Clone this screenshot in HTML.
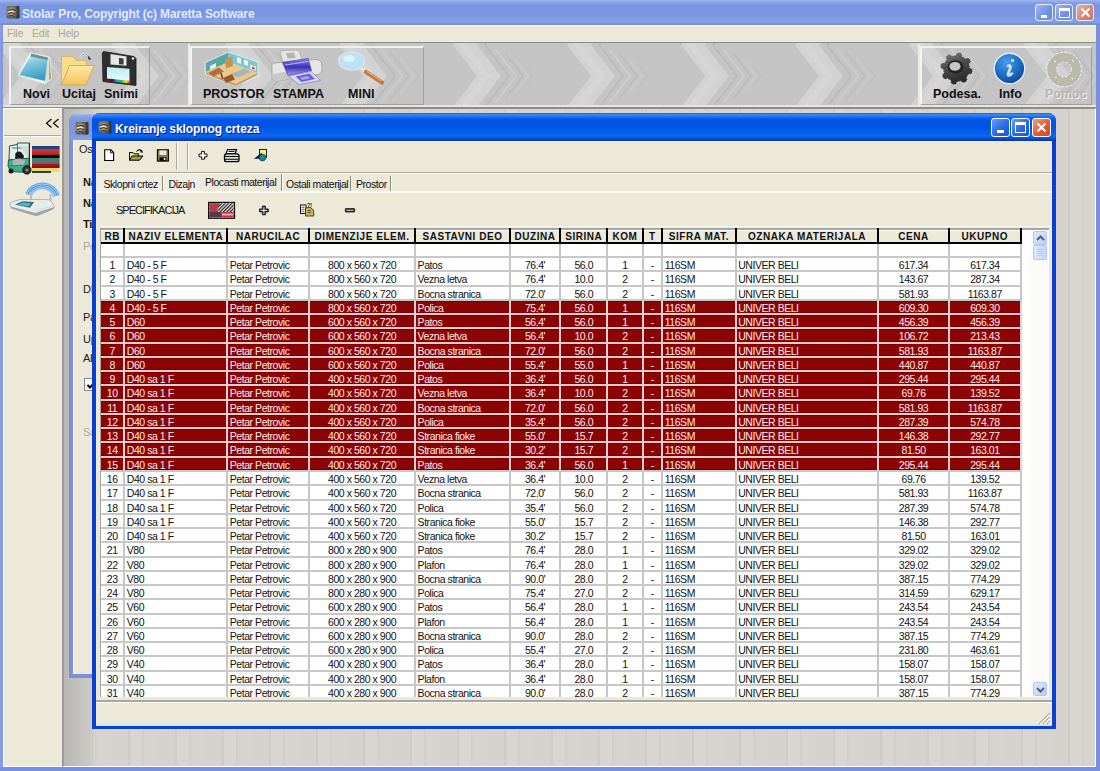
<!DOCTYPE html>
<html><head><meta charset="utf-8">
<style>
*{margin:0;padding:0;box-sizing:border-box}
html,body{width:1100px;height:771px;overflow:hidden;background:#d6d3ce;font-family:"Liberation Sans",sans-serif}
.a{position:absolute}
/* outer frame */
#otitle{left:0;top:0;width:1100px;height:25px;background:linear-gradient(#a0b8ee 0px,#8aa5e8 2px,#7995df 5px,#7a96df 16px,#7fa0e8 19px,#83a0e8 22px,#7a8ac8 24px,#7a8ac8 25px)}
#ottext{left:22px;top:7px;font-weight:bold;font-size:12px;color:#e2eafb;letter-spacing:-0.15px;white-space:nowrap}
#oleft{left:0;top:25px;width:4px;height:746px;background:linear-gradient(90deg,#8a9ee6,#7b8fe0)}
#oright{left:1096px;top:25px;width:4px;height:746px;background:#7b8fe0}
#obottom{left:0;top:767px;width:1100px;height:4px;background:#7b8fe0}
#menu{left:3px;top:25px;width:1093px;height:17px;background:#ece9d8;border-top:1px solid #fbfaf4}
#menu span{position:absolute;top:1px;font-size:10.5px;color:#aca899;letter-spacing:-0.2px}
#tb{left:3px;top:42px;width:1093px;height:66px;background:#c9c9c9;border-top:1px solid #908d82;border-bottom:1px solid #8f8c80;overflow:hidden}
.grp{position:absolute;top:3px;height:59px;border-left:2px solid #f4f4f0;border-top:2px solid #f0f0ec;border-right:1px solid #a09f9a;border-bottom:1px solid #a09f9a}
.lbl{position:absolute;top:44px;font-weight:bold;font-size:12.5px;color:#111;white-space:nowrap}
#lp{left:3px;top:108px;width:60px;height:659px;background:#ece9d8;border-top:1px solid #fff;border-left:1px solid #fff;border-right:1px solid #fbfaf4;border-bottom:1px solid #fff}
#mdi{left:62px;top:108px;width:1034px;height:659px;background:repeating-linear-gradient(90deg,#d6d3ce 0 17px,#cfccc7 17px 19px,#d9d6d1 19px 31px,#d2cfca 31px 33px,#d7d4cf 33px 47px);border-left:2px solid #9c9a94;border-top:1px solid #8d8c88;border-right:1px solid #fff;border-bottom:1px solid #fff}
/* back window */
#bw{left:69px;top:114px;width:40px;height:564px;background:#7b8fe0;border-radius:7px 0 0 0}
#bwt{left:69px;top:114px;width:40px;height:26px;border-radius:7px 0 0 0;background:linear-gradient(#a9bff0 0px,#8aa5e8 2px,#7b97e0 6px,#7a96df 18px,#84a1e7 26px)}
#bwin{left:73px;top:140px;width:30px;height:534px;background:#ece9d8;border-left:1px solid #fff}
.bt{position:absolute;font-size:11px;color:#1a1a1a;white-space:nowrap;letter-spacing:-0.3px}
/* front window */
#fw{left:92px;top:112.5px;width:964px;height:616px;background:#0b3fd3;border-radius:8px 8px 0 0;overflow:hidden}
#fwtitle{left:0;top:0;width:964px;height:28px;background:linear-gradient(#1848a8 0px,#3a8cf6 1px,#2a7af4 3px,#0058e6 6px,#0052e2 14px,#0160f4 20px,#0a66f8 23px,#0a55d8 25px,#0c3c9c 27px)}
#fwbody{left:4px;top:28px;width:956px;height:585px;background:#ece9d8}
#fwttext{left:23px;top:7px;font-weight:bold;font-size:12px;color:#fff;white-space:nowrap;letter-spacing:-0.1px;text-shadow:1px 1px 0 #0a1e8c}
.xb{position:absolute;width:19px;height:19px;border:1px solid #fff;border-radius:3px;background:linear-gradient(135deg,#6c9cf8 0%,#2a68e6 55%,#1c57d8 100%)}
.xbo{position:absolute;width:18px;height:17px;border:1px solid #e8eefc;border-radius:3px;background:linear-gradient(135deg,#9fb8f4 0%,#6f90e4 60%,#6a8be0 100%)}
/* table */
#tbl{left:100px;top:228px;width:949px;height:469px;background:#fff;overflow:hidden;border-left:1px solid #a7a6a0}
#hdr{left:0;top:0;width:921px;height:16px;background:#ece9d8;border-bottom:2px solid #000}
.h{position:absolute;top:1.5px;height:12.5px;font-weight:bold;font-size:10px;text-align:center;line-height:12px;color:#111;letter-spacing:0.55px;white-space:nowrap;overflow:hidden;border-top:1px solid #fff}
.hv{position:absolute;top:0;width:2px;height:16px;background:#000}
.vl{position:absolute;top:16px;width:2px;height:460px;background:#c6c6c6}
.hl{position:absolute;left:0;width:921px;height:2px;background:#c8c8c8}
.hl.sl{background:#eccccc}
.vls{position:absolute;width:2px;background:#e9cfcf}
.td{position:absolute;height:14px;font-size:10.5px;color:#111;line-height:14px;white-space:nowrap;overflow:hidden;padding:0 1.5px;letter-spacing:-0.45px}
.td.l{text-align:left}.td.r{text-align:right;padding-right:5px}.td.c{text-align:center}
.rs{position:absolute;left:0;width:921px;background:#8b0303}
.dt{position:absolute;left:0;width:919px;height:1px;background:repeating-linear-gradient(90deg,#2a0000 0 1px,transparent 1px 2px);opacity:.7}
.td.s{color:#fbe9e9}

.tabt{font-size:10.5px;letter-spacing:-0.45px;color:#111;white-space:nowrap}
#sb{left:1029px;top:229.5px;width:20px;height:467.5px;background:#fbfbf9}
</style></head><body>
<!-- OUTER FRAME -->
<div class="a" id="otitle"></div>
<svg class="a" style="left:5px;top:4px" width="16" height="16" viewBox="0 0 16 16"><defs><radialGradient id="gico" cx="0.35" cy="0.45" r="0.7"><stop offset="0" stop-color="#cfc6ac"/><stop offset="0.5" stop-color="#857c68"/><stop offset="1" stop-color="#3e3a34"/></radialGradient></defs><path d="M1.5 4 Q1.5 2 3.5 2 L14 2 L14.5 13 Q14.5 14.5 13 14.5 L3.5 14.5 Q1.5 14.5 1.5 12.5 Z" fill="url(#gico)"/><path d="M11.5 2.5 L14.5 2.5 L14.5 14 L11.5 14.5 Z" fill="#3a352f" opacity="0.8"/><path d="M2.5 6.5 Q7 4.5 11 6.5 M3 9.5 Q7 7.5 10.5 10 M4 12 Q7 11 9.5 12.5" stroke="#2e2a24" stroke-width="1" fill="none"/><path d="M3 8 Q6 6.5 9 8" stroke="#eee6cc" stroke-width="1.1" fill="none"/></svg>
<div class="a" id="ottext">Stolar Pro, Copyright (c) Maretta Software</div>
<div class="xbo" style="left:1035px;top:4px"><div class="a" style="left:5px;top:10px;width:6px;height:3px;background:#fff"></div></div>
<div class="xbo" style="left:1055px;top:4px"><div class="a" style="left:3px;top:3px;width:11px;height:10px;border:1px solid #fff;border-top-width:3px"></div></div>
<div class="xbo" style="left:1076px;top:4px;background:linear-gradient(135deg,#eab0a0 0%,#d9826b 60%,#cf7660 100%)"><svg class="a" style="left:3px;top:2px" width="11" height="11"><path d="M1.5 1.5L9.5 9.5M9.5 1.5L1.5 9.5" stroke="#fff" stroke-width="2.2"/></svg></div>
<div class="a" id="oleft"></div><div class="a" id="oright"></div><div class="a" id="obottom"></div>
<div class="a" id="menu"><span style="left:4px">File</span><span style="left:29px">Edit</span><span style="left:55px">Help</span></div>
<!-- TOOLBAR -->
<div class="a" id="tb">
<svg class="a" style="left:0;top:0" width="1093" height="63">
 <defs>
  <pattern id="chev" x="-8" y="2" width="114" height="62" patternUnits="userSpaceOnUse">
   <rect width="114" height="62" fill="#c4c4c4"/>
   <path d="M2 0 L26 0 L50 31 L26 62 L2 62 L26 31 Z" fill="#d2d2d2"/>
   <path d="M8 0 L16 0 L40 31 L16 62 L8 62 L32 31 Z" fill="#d8d8d8" opacity="0.7"/>
   <path d="M34 0 L58 31 L34 62" fill="none" stroke="#bababa" stroke-width="1.6"/>
   <path d="M44 4 L65 31 L44 58" fill="none" stroke="#cdcdcd" stroke-width="2"/>
   <path d="M54 8 L72 31 L54 54" fill="none" stroke="#bcbcbc" stroke-width="1.4"/>
   <path d="M64 14 L77 31 L64 48" fill="none" stroke="#cbcbcb" stroke-width="1.6"/>
   <path d="M74 20 L82 31 L74 42" fill="none" stroke="#bfbfbf" stroke-width="1.2"/>
  </pattern>
 </defs>
 <rect width="1093" height="63" fill="url(#chev)"/>
</svg>

  <div class="a" style="left:0;top:62px;width:1093px;height:2px;background:#e6e5df"></div>
  <div class="grp" style="left:6px;width:141px"></div>
  <div class="grp" style="left:187px;width:234px"></div>
  <div class="grp" style="left:917px;width:172px"></div>
  <div class="a" style="left:185px;top:1px;width:2px;height:63px;background:#ecebe6"></div>
  <div class="a" style="left:915px;top:1px;width:2px;height:63px;background:#ecebe6"></div>
  <div class="lbl" style="left:20px">Novi</div>
  <div class="lbl" style="left:59px">Ucitaj</div>
  <div class="lbl" style="left:101px">Snimi</div>
  <div class="lbl" style="left:200px">PROSTOR</div>
  <div class="lbl" style="left:270px">STAMPA</div>
  <div class="lbl" style="left:345px">MINI</div>
  <div class="lbl" style="left:930px">Podesa.</div>
  <div class="lbl" style="left:996px">Info</div>
  <div class="lbl" style="left:1042px;color:#b8b6ab;text-shadow:1px 1px 0 #eee">Pomoc</div>
</div>
<svg class="a" style="left:0;top:44px" width="1100" height="62" viewBox="0 44 1100 62">
 <defs>
  <linearGradient id="gnote" x1="0" y1="0" x2="0.3" y2="1"><stop offset="0" stop-color="#cdeef5"/><stop offset="0.45" stop-color="#7cc5dc"/><stop offset="1" stop-color="#3a9fc4"/></linearGradient>
  <linearGradient id="gfold" x1="0" y1="0" x2="0" y2="1"><stop offset="0" stop-color="#fde9a6"/><stop offset="1" stop-color="#f3c25a"/></linearGradient>
  <linearGradient id="glab" x1="0" y1="0" x2="0" y2="1"><stop offset="0" stop-color="#b6eef4"/><stop offset="1" stop-color="#f2fbfd"/></linearGradient>
  <linearGradient id="grain" x1="0" y1="0" x2="1" y2="0"><stop offset="0" stop-color="#a01010"/><stop offset="0.25" stop-color="#301060"/><stop offset="0.45" stop-color="#30a0e0"/><stop offset="0.65" stop-color="#30c040"/><stop offset="0.85" stop-color="#f0e030"/><stop offset="1" stop-color="#e03020"/></linearGradient>
  <radialGradient id="ginfo" cx="0.4" cy="0.35" r="0.7"><stop offset="0" stop-color="#6fb7ee"/><stop offset="0.6" stop-color="#2a78cc"/><stop offset="1" stop-color="#1a4f9a"/></radialGradient>
  <linearGradient id="gbed" x1="0" y1="0" x2="0" y2="1"><stop offset="0" stop-color="#8d86e8"/><stop offset="0.5" stop-color="#3b2fb8"/><stop offset="1" stop-color="#a7a2f0"/></linearGradient>
 </defs>
 <!-- Novi notepad -->
 <path d="M30 52.5 L50 57 L51.5 79 L45 84 L18 75.5 Z" fill="#f4f6f4" stroke="#dfe3df" stroke-width="1"/>
 <path d="M44.5 59 L50 57.5 L51 78.5 L45.5 83 Z" fill="#d9dcd2"/>
 <path d="M49.5 58 L51 78.5 L49 80 Z" fill="#b8a060"/>
 <path d="M31 55 L47.5 58.5 L45 81 L19.5 75 Z" fill="url(#gnote)"/>
 <path d="M31 53.5 L48 57.5 L47.5 60 L30.5 56.5 Z" fill="#6f8e90"/>
 <!-- Ucitaj folder -->
 <path d="M61.5 57.5 Q61.5 56.5 63 56.5 L73 56.5 L76 60.5 L86 60.5 L86.5 65 L62 85 L61.5 84 Z" fill="#f7dc8c" stroke="#d8b468" stroke-width="0.9"/>
 <path d="M69.5 65.5 L94 65.5 L86 85 L61.5 85 Z" fill="url(#gfold)" stroke="#d4a84e" stroke-width="0.9"/>
 <path d="M80 57.5 Q84 51 89.5 56.5" fill="none" stroke="#e8eef8" stroke-width="2.2"/>
 <path d="M80 57.5 Q84 51 89.5 56.5" fill="none" stroke="#8090b0" stroke-width="0.8"/>
 <path d="M87.5 55 L91.5 59.5 L88.5 59.5 Z" fill="#2a3150"/>
 <!-- Snimi floppy -->
 <path d="M103.5 51.5 L134 56.5 L136 58.5 L136 85.5 L103 81.5 L102.3 53 Z" fill="#2f2f31" stroke="#1a1a1a" stroke-width="0.8"/>
 <path d="M110.5 54 L126.5 56.5 L126.5 65.8 L110.5 64.5 Z" fill="#e6e6e4"/>
 <path d="M119 58 L123.5 58.6 L123.5 64.5 L119 64.2 Z" fill="#3b3b3b"/>
 <path d="M107 67 L129.5 68.8 L129.5 83 L107 80.5 Z" fill="url(#glab)"/>
 <path d="M107 78.5 L129.5 80.8 L129.5 83.5 L107 81 Z" fill="url(#grain)"/>
 <circle cx="133" cy="58.5" r="1.2" fill="#eee"/>
 <!-- PROSTOR room -->
 <path d="M204.5 62.5 L228.5 51.5 L258.5 62 L258.5 76 L235.5 86.5 L205 74.5 Z" fill="#eef2f4" opacity="0.75"/>
 <path d="M205.5 63 L228.5 52.5 L228.5 62 L206 72 Z" fill="#58a6ae"/>
 <path d="M228.5 52.5 L257.5 62.5 L257.5 73 L228.5 62 Z" fill="#7fc6ce"/>
 <path d="M206 72 L228.5 62 L257.5 73 L235.5 84 Z" fill="#e9c98e"/>
 <path d="M206 72 L235.5 84 L235.5 86 L206 74 Z" fill="#c49a5e"/>
 <path d="M235.5 84 L257.5 73 L257.5 75 L235.5 86 Z" fill="#b89868"/>
 <path d="M237 57 L241 58.4 L241 64 L237 62.6 Z M244 59.5 L248 61 L248 66 L244 64.6 Z" fill="#e8f4f6"/>
 <path d="M208.5 72.5 L219 67.5 L224 71.5 L213.5 76.5 Z" fill="#b0703e"/>
 <path d="M210 66 L216 63 L216 67 L210 70 Z" fill="#f0f0f0"/>
 <path d="M225 59 L232 56.5 L233 66 L226 68.5 Z" fill="#c88e54"/>
 <path d="M217.5 60.5 L224 57.5 L224 63.5 L217.5 66.5 Z" fill="#4fae8a"/>
 <path d="M231 74 L244.5 68.5 L251 72 L237.5 77.5 Z" fill="#a9b3b8"/>
 <path d="M223 78 L232 74 L235 79.5 L226 83 Z" fill="#98582f"/>
 <path d="M220 73 L222 79 L223.5 78.5 L221.5 72.5 Z" fill="#7a4626"/>
 <path d="M250 64.5 L256 66.8 L256 71 L250 68.8 Z" fill="#f2dbe4"/>
 <path d="M252 67 L254.5 68 L254.5 69.5 L252 68.5 Z" fill="#8a2850"/>
 <!-- STAMPA printer -->
 <path d="M280 53 Q281 50.5 284 50.5 L296 50 Q299 50 300 53 L302 60 L283 62 Z" fill="#e4e4e2" stroke="#a8a8a4" stroke-width="0.8"/>
 <path d="M286 53 L294 52.6 L295.5 58 L287.5 58.5 Z" fill="#b4b4b0"/>
 <path d="M272 67 Q271 63.5 275 63 L285 62 Q289 62 290 66 L292 74 Q292.5 78 289 79 L278 81 Q273 81.5 272 77 Z" fill="#e6e6e4" stroke="#9c9c98" stroke-width="0.8"/>
 <path d="M273 74 L291 71 L292 75 Q292 78 289 79 L278 81 Q273 81.5 272.5 77 Z" fill="#c8c8c6"/>
 <path d="M304 60.5 L316 59.5 Q320.5 59.5 321.5 63 L322 70 Q322 74 318 74.5 L309 75.5 Z" fill="#e6e6e4" stroke="#9c9c98" stroke-width="0.8"/>
 <path d="M282.5 62.5 L308 58.5 L311.5 70.5 L288 75.5 Z" fill="url(#gbed)" stroke="#4a40a8" stroke-width="0.7"/>
 <path d="M285 65 L308.5 61.5" stroke="#b8b4f4" stroke-width="1.2"/>
 <path d="M288.5 76 L311 71.5 L320.5 80.5 L299 84.5 Z" fill="#dcdcec" stroke="#8886bc" stroke-width="0.8"/>
 <path d="M295.5 76.5 L309.5 73.5 L315 79 L301.5 82 Z" fill="#6a62d6"/>
 <path d="M300 77.5 L308 76 L310 78.5 L302 80 Z" fill="#a6a2ee"/>
 <!-- MINI magnifier -->
 <ellipse cx="351.5" cy="61" rx="13" ry="9.2" fill="#bde0f4" stroke="#d8e4ee" stroke-width="1.3"/>
 <ellipse cx="349" cy="58.5" rx="6" ry="3.5" fill="#dff2fb"/>
 <path d="M361 68 L365 71" stroke="#e6e6e6" stroke-width="3"/>
 <path d="M366 72 L382 82.5" stroke="#c6763e" stroke-width="4.2" stroke-linecap="round"/>
 <path d="M367 71.5 L381 80.5" stroke="#e8a878" stroke-width="1.2" stroke-linecap="round"/>
 <!-- Podesa gear -->
 <defs><linearGradient id="ggear" x1="0" y1="0" x2="0.6" y2="1"><stop offset="0" stop-color="#8a8a8a"/><stop offset="0.45" stop-color="#4e4e4e"/><stop offset="1" stop-color="#262626"/></linearGradient>
 <radialGradient id="ginfo2" cx="0.4" cy="0.3" r="0.75"><stop offset="0" stop-color="#4aa0e8"/><stop offset="0.55" stop-color="#1f6fc6"/><stop offset="1" stop-color="#0e4590"/></radialGradient></defs>
 <g transform="translate(956.5 68.5) rotate(11)">
  <path d="M16.50 0.00 L16.47 0.52 L16.38 1.03 L16.22 1.53 L15.98 2.02 L15.66 2.48 L15.21 2.90 L14.37 3.21 L13.08 3.36 L12.96 3.77 L12.84 4.17 L12.70 4.57 L12.55 4.97 L12.39 5.36 L12.22 5.75 L12.03 6.13 L11.83 6.50 L11.62 6.87 L12.43 7.89 L12.80 8.70 L12.83 9.32 L12.73 9.87 L12.55 10.38 L12.31 10.85 L12.01 11.28 L11.67 11.67 L11.28 12.01 L10.85 12.31 L10.38 12.55 L9.87 12.73 L9.32 12.83 L8.70 12.80 L7.89 12.43 L6.87 11.62 L6.50 11.83 L6.13 12.03 L5.75 12.22 L5.36 12.39 L4.97 12.55 L4.57 12.70 L4.17 12.84 L3.77 12.96 L3.36 13.08 L3.21 14.37 L2.90 15.21 L2.48 15.66 L2.02 15.98 L1.53 16.22 L1.03 16.38 L0.52 16.47 L0.00 16.50 L-0.52 16.47 L-1.03 16.38 L-1.53 16.22 L-2.02 15.98 L-2.48 15.66 L-2.90 15.21 L-3.21 14.37 L-3.36 13.08 L-3.77 12.96 L-4.17 12.84 L-4.57 12.70 L-4.97 12.55 L-5.36 12.39 L-5.75 12.22 L-6.13 12.03 L-6.50 11.83 L-6.87 11.62 L-7.89 12.43 L-8.70 12.80 L-9.32 12.83 L-9.87 12.73 L-10.38 12.55 L-10.85 12.31 L-11.28 12.01 L-11.67 11.67 L-12.01 11.28 L-12.31 10.85 L-12.55 10.38 L-12.73 9.87 L-12.83 9.32 L-12.80 8.70 L-12.43 7.89 L-11.62 6.87 L-11.83 6.50 L-12.03 6.13 L-12.22 5.75 L-12.39 5.36 L-12.55 4.97 L-12.70 4.57 L-12.84 4.17 L-12.96 3.77 L-13.08 3.36 L-14.37 3.21 L-15.21 2.90 L-15.66 2.48 L-15.98 2.02 L-16.22 1.53 L-16.38 1.03 L-16.47 0.52 L-16.50 0.00 L-16.47 -0.52 L-16.38 -1.03 L-16.22 -1.53 L-15.98 -2.02 L-15.66 -2.48 L-15.21 -2.90 L-14.37 -3.21 L-13.08 -3.36 L-12.96 -3.77 L-12.84 -4.17 L-12.70 -4.57 L-12.55 -4.97 L-12.39 -5.36 L-12.22 -5.75 L-12.03 -6.13 L-11.83 -6.50 L-11.62 -6.87 L-12.43 -7.89 L-12.80 -8.70 L-12.83 -9.32 L-12.73 -9.87 L-12.55 -10.38 L-12.31 -10.85 L-12.01 -11.28 L-11.67 -11.67 L-11.28 -12.01 L-10.85 -12.31 L-10.38 -12.55 L-9.87 -12.73 L-9.32 -12.83 L-8.70 -12.80 L-7.89 -12.43 L-6.87 -11.62 L-6.50 -11.83 L-6.13 -12.03 L-5.75 -12.22 L-5.36 -12.39 L-4.97 -12.55 L-4.57 -12.70 L-4.17 -12.84 L-3.77 -12.96 L-3.36 -13.08 L-3.21 -14.37 L-2.90 -15.21 L-2.48 -15.66 L-2.02 -15.98 L-1.53 -16.22 L-1.03 -16.38 L-0.52 -16.47 L-0.00 -16.50 L0.52 -16.47 L1.03 -16.38 L1.53 -16.22 L2.02 -15.98 L2.48 -15.66 L2.90 -15.21 L3.21 -14.37 L3.36 -13.08 L3.77 -12.96 L4.17 -12.84 L4.57 -12.70 L4.97 -12.55 L5.36 -12.39 L5.75 -12.22 L6.13 -12.03 L6.50 -11.83 L6.87 -11.62 L7.89 -12.43 L8.70 -12.80 L9.32 -12.83 L9.87 -12.73 L10.38 -12.55 L10.85 -12.31 L11.28 -12.01 L11.67 -11.67 L12.01 -11.28 L12.31 -10.85 L12.55 -10.38 L12.73 -9.87 L12.83 -9.32 L12.80 -8.70 L12.43 -7.89 L11.62 -6.87 L11.83 -6.50 L12.03 -6.13 L12.22 -5.75 L12.39 -5.36 L12.55 -4.97 L12.70 -4.57 L12.84 -4.17 L12.96 -3.77 L13.08 -3.36 L14.37 -3.21 L15.21 -2.90 L15.66 -2.48 L15.98 -2.02 L16.22 -1.53 L16.38 -1.03 L16.47 -0.52 Z" fill="url(#ggear)" stroke="#eeeeee" stroke-width="0.9" stroke-dasharray="1.2 0.8"/>
 </g>
 <ellipse cx="955.5" cy="66.8" rx="8" ry="6.6" fill="#222"/>
 <ellipse cx="955" cy="66.3" rx="5.6" ry="4.4" fill="#c6c6c6"/>
 <!-- Info -->
 <circle cx="1009.5" cy="68.5" r="15.3" fill="url(#ginfo2)" stroke="#e2ebf7" stroke-width="1.4"/>
 <path d="M1012.5 60.5 m-1.6 0 a1.6 1.6 0 1 0 3.2 0 a1.6 1.6 0 1 0 -3.2 0" fill="#cfe4f8"/>
 <path d="M1008 66 Q1011 64.5 1010.5 67.5 L1008 74 Q1007.5 76 1010 75 L1012 73.5" fill="none" stroke="#cfe4f8" stroke-width="2.6" stroke-linecap="round"/>
 <!-- Pomoc lifebuoy (disabled) -->
 <circle cx="1064" cy="69.5" r="12.3" fill="none" stroke="#bbb8ac" stroke-width="9.6"/>
 <circle cx="1064" cy="69.5" r="17.3" fill="none" stroke="#f2f2ee" stroke-width="1" stroke-dasharray="3 1.5"/>
 <circle cx="1064" cy="69.5" r="7.4" fill="none" stroke="#eeeeea" stroke-width="1" stroke-dasharray="2.5 1.5"/>
 <path d="M1054 61 l2 1 M1072 60 l1.5 1.5 M1055 78 l1.5 -1 M1073 79 l-1.5 -1" stroke="#eeeeea" stroke-width="1.2"/>
</svg>

<!-- LEFT PANEL -->
<div class="a" id="lp"></div>
<div class="a" style="left:4px;top:135px;width:57px;height:2px;border-top:1px solid #aca899;border-bottom:1px solid #fff"></div>
<svg class="a" style="left:45px;top:118px" width="15" height="11"><path d="M6.5 1L1.5 5.3L6.5 9.6M13.5 1L8.5 5.3L13.5 9.6" fill="none" stroke="#111" stroke-width="1.3"/></svg>
<svg class="a" style="left:4px;top:138px" width="58" height="82" viewBox="4 138 58 82">
 <defs>
  <linearGradient id="gstr" x1="0" y1="0" x2="0" y2="1">
   <stop offset="0" stop-color="#1f3a78"/><stop offset="0.13" stop-color="#2a4a88"/>
   <stop offset="0.14" stop-color="#d83a3a"/><stop offset="0.33" stop-color="#b82222"/>
   <stop offset="0.35" stop-color="#100808"/><stop offset="0.45" stop-color="#100808"/>
   <stop offset="0.47" stop-color="#2f8a74"/><stop offset="0.58" stop-color="#3a8070"/>
   <stop offset="0.60" stop-color="#8a6070"/><stop offset="0.70" stop-color="#8a5060"/>
   <stop offset="0.72" stop-color="#a01818"/><stop offset="0.85" stop-color="#8a1010"/>
   <stop offset="0.87" stop-color="#f2dc78"/><stop offset="1" stop-color="#e8d060"/>
  </linearGradient>
  <linearGradient id="gwifi" x1="0" y1="0" x2="0" y2="1"><stop offset="0" stop-color="#3f86dc"/><stop offset="1" stop-color="#8fc4f0"/></linearGradient>
 </defs>
 <!-- forklift -->
 <rect x="32" y="146" width="27.6" height="25.6" fill="url(#gstr)"/>
 <path d="M32 172 L51 172" stroke="#111" stroke-width="1.6"/>
 <path d="M9.5 146 L17 144.5 L17.5 143 L29.5 143 L29.5 160 L9 160 Z" fill="#e4eeea" stroke="#1f5a48" stroke-width="1"/>
 <path d="M17.5 143.5 L17.5 156 M12 148 L24 148" stroke="#2f8a6c" stroke-width="1"/>
 <path d="M20 146 L28.5 146 L28.5 158 L24 152 Z" fill="#d0dcd8"/>
 <path d="M15.5 153 Q18 150.5 21 152 L24 156 L23 160 L15 160 Z" fill="#151c1a"/>
 <path d="M8.5 160 L29.5 158 L29.5 172 L27 172.5 L10.5 171.5 L8 166 Z" fill="#3fb08e" stroke="#1c4a3c" stroke-width="0.9"/>
 <path d="M12.5 160 Q19 157 25 160 L24 166 L13.5 166 Z" fill="#aeb6b2"/>
 <path d="M9 166 L29 165" stroke="#2a8068" stroke-width="1"/>
 <path d="M28.8 143 L30 143 L30 172.5 L28.8 172.5 Z" fill="#17302a"/>
 <circle cx="26.9" cy="170" r="4.2" fill="#2a2e2c" stroke="#111" stroke-width="0.8"/>
 <circle cx="26.9" cy="170" r="1.6" fill="#8a908c"/>
 <circle cx="11" cy="171" r="2.5" fill="#1c1c1c"/>
 <!-- router -->
 <path d="M28.67 194.79 A 14.50 13.77 0 0 1 56.31 195.93" fill="none" stroke="#d8e8f6" stroke-width="8"/><path d="M31.21 195.67 A 11.80 11.21 0 0 1 53.70 196.60" fill="none" stroke="#7fb6ec" stroke-width="1.3"/><path d="M29.52 195.08 A 13.60 12.92 0 0 1 55.44 196.16" fill="none" stroke="#5b9ee6" stroke-width="1.3"/><path d="M27.83 194.50 A 15.40 14.63 0 0 1 57.18 195.71" fill="none" stroke="#4a90e0" stroke-width="1.3"/><path d="M26.14 193.91 A 17.20 16.34 0 0 1 58.91 195.27" fill="none" stroke="#6aaae8" stroke-width="1.3"/>
 <path d="M31 192 L31 204 M50.5 194 L50.5 205" stroke="#b8bcc0" stroke-width="2"/>
 <path d="M10 205 Q9.5 203 12 202 L20 199.5 L47 199.5 Q50 199.5 51.5 201.5 L54 206 Q55 208 52 209.5 L38.5 215 Q36.5 216 34 215.2 L12 208.5 Q10 207.5 10 205 Z" fill="#e8eaec" stroke="#a4a8ac" stroke-width="0.8"/>
 <path d="M10.5 206.5 L35.5 213 L54.2 207 Q54.8 208.5 52 209.8 L38.5 215.2 Q36.5 216 34 215.3 L12 208.6 Q10.4 207.8 10.5 206.5 Z" fill="#9ea3a8"/>
 <path d="M15 204.5 L22.5 201.2 L34 202 L30 207.8 Z" fill="#3a6c78"/>
 <path d="M17.5 204.6 L23 202.6 L31 203.4 L28.5 206.3 Z" fill="#3cc0cc"/>
 <path d="M36 211 L52 206" stroke="#d0d4d8" stroke-width="0.8"/>
 </svg>

<!-- MDI -->
<div class="a" id="mdi"></div>
<div class="a" style="left:64px;top:109px;width:30px;height:657px;background:linear-gradient(90deg,#b9b7b3,#c6c4c0 60%,#d0cdc9)"></div>
<!-- BACK WINDOW -->
<div class="a" id="bw"></div>
<div class="a" id="bwt"></div>
<svg class="a" style="left:74px;top:120px" width="16" height="16" viewBox="0 0 16 16"><path d="M1.5 4 Q1.5 2 3.5 2 L14 2 L14.5 13 Q14.5 14.5 13 14.5 L3.5 14.5 Q1.5 14.5 1.5 12.5 Z" fill="url(#gico)"/><path d="M11.5 2.5 L14.5 2.5 L14.5 14 L11.5 14.5 Z" fill="#3a352f" opacity="0.8"/><path d="M2.5 6.5 Q7 4.5 11 6.5 M3 9.5 Q7 7.5 10.5 10 M4 12 Q7 11 9.5 12.5" stroke="#2e2a24" stroke-width="1" fill="none"/><path d="M3 8 Q6 6.5 9 8" stroke="#eee6cc" stroke-width="1.1" fill="none"/></svg>
<div class="a" id="bwin"></div>
<div class="bt" style="left:79px;top:143px">Os</div>
<div class="bt" style="left:83px;top:176px;font-weight:bold">Na</div>
<div class="bt" style="left:83px;top:197px;font-weight:bold">Na</div>
<div class="bt" style="left:83px;top:218px;font-weight:bold">Tip</div>
<div class="bt" style="left:83px;top:240px;color:#aca899">Po</div>
<div class="bt" style="left:83px;top:283px">DI</div>
<div class="bt" style="left:83px;top:311px">Pa</div>
<div class="bt" style="left:83px;top:333px">Up</div>
<div class="bt" style="left:83px;top:352px">AB</div>
<div class="a" style="left:84px;top:378px;width:13px;height:13px;border:1px solid #8a8a8a;background:#fff"><svg class="a" style="left:1px;top:1px" width="10" height="10"><path d="M1.5 5L4 7.5L9 2" stroke="#000" stroke-width="2" fill="none"/></svg></div>
<div class="bt" style="left:83px;top:426px;color:#aca899">Sa</div>
<!-- FRONT WINDOW -->
<div class="a" id="fw">
  <div class="a" id="fwtitle"></div>
  <div class="a" id="fwbody"></div>
</div>
<svg class="a" style="left:97px;top:119px" width="16" height="16" viewBox="0 0 16 16"><path d="M1.5 4 Q1.5 2 3.5 2 L14 2 L14.5 13 Q14.5 14.5 13 14.5 L3.5 14.5 Q1.5 14.5 1.5 12.5 Z" fill="url(#gico)"/><path d="M11.5 2.5 L14.5 2.5 L14.5 14 L11.5 14.5 Z" fill="#3a352f" opacity="0.8"/><path d="M2.5 6.5 Q7 4.5 11 6.5 M3 9.5 Q7 7.5 10.5 10 M4 12 Q7 11 9.5 12.5" stroke="#2e2a24" stroke-width="1" fill="none"/><path d="M3 8 Q6 6.5 9 8" stroke="#eee6cc" stroke-width="1.1" fill="none"/></svg>
<div class="a" id="fwttext" style="left:115px;top:122px">Kreiranje sklopnog crteza</div>
<div class="xb" style="left:991px;top:118px"><div class="a" style="left:5px;top:11px;width:7px;height:3px;background:#fff"></div></div>
<div class="xb" style="left:1011px;top:118px"><div class="a" style="left:3px;top:3px;width:11px;height:11px;border:1px solid #fff;border-top-width:3px"></div></div>
<div class="xb" style="left:1032px;top:118px;background:linear-gradient(135deg,#f0a080 0%,#e05c34 55%,#d04a22 100%)"><svg class="a" style="left:3px;top:3px" width="11" height="11"><path d="M1.5 1.5L9.5 9.5M9.5 1.5L1.5 9.5" stroke="#fff" stroke-width="2.2"/></svg></div>
<!-- inner toolbar -->
<div class="a" style="left:96px;top:172px;width:956px;height:2px;border-top:1px solid #aca899;border-bottom:1px solid #fff"></div>
<div class="a" style="left:176px;top:143px;width:2px;height:27px;border-left:1px solid #aca899;border-right:1px solid #fff"></div>
<div class="a" style="left:187px;top:143px;width:2px;height:27px;border-left:1px solid #aca899;border-right:1px solid #fff"></div>
<svg class="a" style="left:96px;top:140px" width="300" height="85" viewBox="96 140 300 85">
 <defs>
  <pattern id="hatch" width="2.4" height="2.4" patternUnits="userSpaceOnUse" patternTransform="rotate(45)"><rect width="2.4" height="2.4" fill="#e8e8e8"/><rect width="1.2" height="2.4" fill="#222"/></pattern>
 </defs>
 <!-- new doc -->
 <path d="M104.7 149.8 L111 149.8 L113.6 152.4 L113.6 160.5 L104.7 160.5 Z" fill="#fff" stroke="#000" stroke-width="1.1"/>
 <path d="M110.6 150 L110.6 152.8 L113.4 152.8" fill="none" stroke="#000" stroke-width="0.9"/>
 <!-- open folder -->
 <path d="M129.5 152.5 L133 152.5 L134 153.8 L138.5 153.8 L138.5 156 L129.5 160 Z" fill="#e8e878" stroke="#000" stroke-width="1"/>
 <path d="M132 156 L143 156 L139.5 160.2 L129.5 160.2 Z" fill="#a8a040" stroke="#000" stroke-width="1"/>
 <path d="M136.5 151.5 Q139 148.5 142 151" fill="none" stroke="#000" stroke-width="1.1"/>
 <path d="M141 149.8 L143.3 152.5 L140.3 152.6 Z" fill="#000"/>
 <!-- save -->
 <rect x="157.4" y="149.8" width="11" height="11.3" fill="#808040" stroke="#000" stroke-width="1.1"/>
 <rect x="159.4" y="150.4" width="7" height="4.6" fill="#e8e8d8"/>
 <rect x="159.5" y="157.4" width="6.8" height="3.4" fill="#000"/>
 <rect x="163.8" y="158" width="1.5" height="2" fill="#fff"/>
 <!-- plus -->
 <path d="M201.6 151.4 L204.4 151.4 L204.4 154 L207 154 L207 156.8 L204.4 156.8 L204.4 159.2 L201.6 159.2 L201.6 156.8 L199 156.8 L199 154 L201.6 154 Z" fill="#fff" stroke="#111" stroke-width="1"/>
 <!-- printer -->
 <path d="M227.5 149.6 L236.5 149.6 L235 153.8 L226 153.8 Z" fill="#fff" stroke="#000" stroke-width="1.2"/>
 <path d="M228.5 151.5 L234.5 151.5" stroke="#000" stroke-width="0.9"/>
 <rect x="224.5" y="153.8" width="14.5" height="7.8" rx="2.2" fill="#e0e0d8" stroke="#000" stroke-width="1.3"/>
 <path d="M225 156.5 L238.5 156.5 M225 159.2 L238.5 159.2" stroke="#000" stroke-width="1.1"/>
 <!-- shapes icon -->
 <rect x="259.5" y="149.5" width="7" height="8" fill="#f0f080" stroke="#111" stroke-width="0.9"/>
 <path d="M253.8 158.8 L261.5 152.8 L262.5 158.8 Z" fill="#101848"/>
 <circle cx="262.5" cy="157.6" r="3.3" fill="#208890" stroke="#0a2a30" stroke-width="0.7"/>
 <!-- spec row -->
 <rect x="208.7" y="202.5" width="25.7" height="15.7" fill="#fff" stroke="#111" stroke-width="1.4"/>
 <rect x="209.5" y="203.3" width="24" height="14" fill="url(#hatch)"/>
 <path d="M209.5 203.3 L220 203.3 L216 212 L233.5 212 L233.5 217.3 L209.5 217.3 Z" fill="#b83a48"/>
 <path d="M209.5 212 L220 212 L222 217.3 L209.5 217.3 Z" fill="#5a3a48"/>
 <path d="M222 213.5 L233 213.5 L233 215.5 L222 215.5 Z" fill="#f0a8b0"/>
 <path d="M262.4 206 L265.4 206 L265.4 208.9 L268.3 208.9 L268.3 211.9 L265.4 211.9 L265.4 214.8 L262.4 214.8 L262.4 211.9 L259.5 211.9 L259.5 208.9 L262.4 208.9 Z" fill="#333" stroke="#111" stroke-width="0.8"/><path d="M263.9 207.2 L263.9 213.6 M260.7 210.4 L267.1 210.4" stroke="#fff" stroke-width="0.9"/>
 <rect x="300.5" y="205" width="5.5" height="8.5" fill="#fff" stroke="#111" stroke-width="1"/>
 <path d="M301.5 207.3 L304.5 207.3 M301.5 209.3 L304.5 209.3 M301.5 211.3 L304.5 211.3" stroke="#111" stroke-width="0.7"/>
 <path d="M305.5 208 L310 207.2 L313.5 210 L313.8 216 L305.5 216 Z" fill="#c8b850" stroke="#222" stroke-width="0.8"/>
 <path d="M307.5 210.5 L311 210.5 M307.5 212.5 L311 212.5" stroke="#333" stroke-width="0.8"/>
 <text x="307" y="206.5" font-family="Liberation Sans" font-weight="bold" font-size="5.5" fill="#111">?!</text>
 <rect x="345.3" y="208.6" width="9.4" height="3.4" rx="0.5" fill="#333" stroke="#111" stroke-width="0.8"/><path d="M346.5 210.3 L353.5 210.3" stroke="#fff" stroke-width="0.8"/>
</svg>

<!-- tabs -->
<div class="a" style="left:98px;top:175px;width:102px;height:18px;background:#f0eee4"></div>
<div class="a" style="left:162px;top:176px;width:2px;height:16px;border-left:1px solid #8d8a7c;border-right:1px solid #fff"></div>
<div class="a tabt" style="left:103.5px;top:178px">Sklopni crtez</div>
<div class="a tabt" style="left:168.5px;top:178px">Dizajn</div>
<div class="a tabt" style="left:205px;top:176px">Plocasti materijal</div>
<div class="a" style="left:281px;top:174px;width:2px;height:18px;border-left:1px solid #8d8a7c;border-right:1px solid #fff"></div>
<div class="a tabt" style="left:286px;top:178px">Ostali materijal</div>
<div class="a" style="left:350px;top:176px;width:2px;height:16px;border-left:1px solid #8d8a7c;border-right:1px solid #fff"></div>
<div class="a tabt" style="left:356px;top:178px">Prostor</div>
<div class="a" style="left:390px;top:176px;width:2px;height:16px;border-left:1px solid #8d8a7c;border-right:1px solid #fff"></div>
<div class="a" style="left:116px;top:204px;font-size:11px;letter-spacing:-1px;color:#111">SPECIFIKACIJA</div>
<div class="a" style="left:96px;top:191px;width:956px;height:2px;background:#fbfaf3"></div>

<!-- table -->
<div class="a" style="left:100px;top:225.5px;width:950px;height:1.5px;background:#f9f8f1"></div>
<div class="a" id="tbl">
  <div class="a" id="hdr"></div>
  <div class="a" style="left:0;top:0;width:949px;height:1.5px;background:#a9a79e"></div>
<div class="h" style="left:0.00px;width:22.30px">RB</div>
<div class="h" style="left:24.30px;width:101.00px">NAZIV ELEMENTA</div>
<div class="h" style="left:127.30px;width:79.70px">NARUCILAC</div>
<div class="h" style="left:209.00px;width:104.10px">DIMENZIJE ELEM.</div>
<div class="h" style="left:315.10px;width:92.90px">SASTAVNI DEO</div>
<div class="h" style="left:410.00px;width:48.20px">DUZINA</div>
<div class="h" style="left:460.20px;width:45.20px">SIRINA</div>
<div class="h" style="left:507.40px;width:33.20px">KOM</div>
<div class="h" style="left:542.60px;width:17.60px">T</div>
<div class="h" style="left:562.20px;width:71.50px">SIFRA MAT.</div>
<div class="h" style="left:635.70px;width:140.70px">OZNAKA MATERIJALA</div>
<div class="h" style="left:778.40px;width:68.30px">CENA</div>
<div class="h" style="left:848.70px;width:70.30px">UKUPNO</div>
<div class="hv" style="left:22.30px"></div>
<div class="hv" style="left:125.30px"></div>
<div class="hv" style="left:207.00px"></div>
<div class="hv" style="left:313.10px"></div>
<div class="hv" style="left:408.00px"></div>
<div class="hv" style="left:458.20px"></div>
<div class="hv" style="left:505.40px"></div>
<div class="hv" style="left:540.60px"></div>
<div class="hv" style="left:560.20px"></div>
<div class="hv" style="left:633.70px"></div>
<div class="hv" style="left:776.40px"></div>
<div class="hv" style="left:846.70px"></div>
<div class="hv" style="left:919.00px"></div>
<div class="rs" style="top:72.88px;height:169.12px"></div>
<div class="vl" style="left:22.30px"></div>
<div class="vl" style="left:125.30px"></div>
<div class="vl" style="left:207.00px"></div>
<div class="vl" style="left:313.10px"></div>
<div class="vl" style="left:408.00px"></div>
<div class="vl" style="left:458.20px"></div>
<div class="vl" style="left:505.40px"></div>
<div class="vl" style="left:540.60px"></div>
<div class="vl" style="left:560.20px"></div>
<div class="vl" style="left:633.70px"></div>
<div class="vl" style="left:776.40px"></div>
<div class="vl" style="left:846.70px"></div>
<div class="vl" style="left:919.00px"></div>
<div class="hl" style="top:28.10px"></div>
<div class="hl" style="top:42.36px"></div>
<div class="hl" style="top:56.62px"></div>
<div class="hl" style="top:70.88px"></div>
<div class="hl sl" style="top:85.14px"></div>
<div class="hl sl" style="top:99.40px"></div>
<div class="hl sl" style="top:113.66px"></div>
<div class="hl sl" style="top:127.92px"></div>
<div class="hl sl" style="top:142.18px"></div>
<div class="hl sl" style="top:156.44px"></div>
<div class="hl sl" style="top:170.70px"></div>
<div class="hl sl" style="top:184.96px"></div>
<div class="hl sl" style="top:199.22px"></div>
<div class="hl sl" style="top:213.48px"></div>
<div class="hl sl" style="top:227.74px"></div>
<div class="hl" style="top:242.00px"></div>
<div class="hl" style="top:256.26px"></div>
<div class="hl" style="top:270.52px"></div>
<div class="hl" style="top:284.78px"></div>
<div class="hl" style="top:299.04px"></div>
<div class="hl" style="top:313.30px"></div>
<div class="hl" style="top:327.56px"></div>
<div class="hl" style="top:341.82px"></div>
<div class="hl" style="top:356.08px"></div>
<div class="hl" style="top:370.34px"></div>
<div class="hl" style="top:384.60px"></div>
<div class="hl" style="top:398.86px"></div>
<div class="hl" style="top:413.12px"></div>
<div class="hl" style="top:427.38px"></div>
<div class="hl" style="top:441.64px"></div>
<div class="hl" style="top:455.90px"></div>
<div class="hl" style="top:470.16px"></div>
<div class="dt" style="top:72.88px"></div>
<div class="dt" style="top:84.14px"></div>
<div class="dt" style="top:87.14px"></div>
<div class="dt" style="top:98.40px"></div>
<div class="dt" style="top:101.40px"></div>
<div class="dt" style="top:112.66px"></div>
<div class="dt" style="top:115.66px"></div>
<div class="dt" style="top:126.92px"></div>
<div class="dt" style="top:129.92px"></div>
<div class="dt" style="top:141.18px"></div>
<div class="dt" style="top:144.18px"></div>
<div class="dt" style="top:155.44px"></div>
<div class="dt" style="top:158.44px"></div>
<div class="dt" style="top:169.70px"></div>
<div class="dt" style="top:172.70px"></div>
<div class="dt" style="top:183.96px"></div>
<div class="dt" style="top:186.96px"></div>
<div class="dt" style="top:198.22px"></div>
<div class="dt" style="top:201.22px"></div>
<div class="dt" style="top:212.48px"></div>
<div class="dt" style="top:215.48px"></div>
<div class="dt" style="top:226.74px"></div>
<div class="dt" style="top:229.74px"></div>
<div class="dt" style="top:241.00px"></div>
<div class="vls" style="left:22.30px;top:72.88px;height:169.12px"></div>
<div class="vls" style="left:125.30px;top:72.88px;height:169.12px"></div>
<div class="vls" style="left:207.00px;top:72.88px;height:169.12px"></div>
<div class="vls" style="left:313.10px;top:72.88px;height:169.12px"></div>
<div class="vls" style="left:408.00px;top:72.88px;height:169.12px"></div>
<div class="vls" style="left:458.20px;top:72.88px;height:169.12px"></div>
<div class="vls" style="left:505.40px;top:72.88px;height:169.12px"></div>
<div class="vls" style="left:540.60px;top:72.88px;height:169.12px"></div>
<div class="vls" style="left:560.20px;top:72.88px;height:169.12px"></div>
<div class="vls" style="left:633.70px;top:72.88px;height:169.12px"></div>
<div class="vls" style="left:776.40px;top:72.88px;height:169.12px"></div>
<div class="vls" style="left:846.70px;top:72.88px;height:169.12px"></div>
<div class="vls" style="left:919.00px;top:72.88px;height:169.12px"></div>
<div class="td c" style="left:0.00px;top:30.10px;width:22.30px">1</div>
<div class="td l" style="left:24.30px;top:30.10px;width:101.00px">D40 - 5 F</div>
<div class="td l" style="left:127.30px;top:30.10px;width:79.70px">Petar Petrovic</div>
<div class="td c" style="left:209.00px;top:30.10px;width:104.10px">800 x 560 x 720</div>
<div class="td l" style="left:315.10px;top:30.10px;width:92.90px">Patos</div>
<div class="td c" style="left:410.00px;top:30.10px;width:48.20px">76.4&#x27;</div>
<div class="td c" style="left:460.20px;top:30.10px;width:45.20px">56.0</div>
<div class="td c" style="left:507.40px;top:30.10px;width:33.20px">1</div>
<div class="td c" style="left:542.60px;top:30.10px;width:17.60px">-</div>
<div class="td l" style="left:562.20px;top:30.10px;width:71.50px">116SM</div>
<div class="td l" style="left:635.70px;top:30.10px;width:140.70px">UNIVER BELI</div>
<div class="td c" style="left:778.40px;top:30.10px;width:68.30px">617.34</div>
<div class="td c" style="left:848.70px;top:30.10px;width:70.30px">617.34</div>
<div class="td c" style="left:0.00px;top:44.36px;width:22.30px">2</div>
<div class="td l" style="left:24.30px;top:44.36px;width:101.00px">D40 - 5 F</div>
<div class="td l" style="left:127.30px;top:44.36px;width:79.70px">Petar Petrovic</div>
<div class="td c" style="left:209.00px;top:44.36px;width:104.10px">800 x 560 x 720</div>
<div class="td l" style="left:315.10px;top:44.36px;width:92.90px">Vezna letva</div>
<div class="td c" style="left:410.00px;top:44.36px;width:48.20px">76.4&#x27;</div>
<div class="td c" style="left:460.20px;top:44.36px;width:45.20px">10.0</div>
<div class="td c" style="left:507.40px;top:44.36px;width:33.20px">2</div>
<div class="td c" style="left:542.60px;top:44.36px;width:17.60px">-</div>
<div class="td l" style="left:562.20px;top:44.36px;width:71.50px">116SM</div>
<div class="td l" style="left:635.70px;top:44.36px;width:140.70px">UNIVER BELI</div>
<div class="td c" style="left:778.40px;top:44.36px;width:68.30px">143.67</div>
<div class="td c" style="left:848.70px;top:44.36px;width:70.30px">287.34</div>
<div class="td c" style="left:0.00px;top:58.62px;width:22.30px">3</div>
<div class="td l" style="left:24.30px;top:58.62px;width:101.00px">D40 - 5 F</div>
<div class="td l" style="left:127.30px;top:58.62px;width:79.70px">Petar Petrovic</div>
<div class="td c" style="left:209.00px;top:58.62px;width:104.10px">800 x 560 x 720</div>
<div class="td l" style="left:315.10px;top:58.62px;width:92.90px">Bocna stranica</div>
<div class="td c" style="left:410.00px;top:58.62px;width:48.20px">72.0&#x27;</div>
<div class="td c" style="left:460.20px;top:58.62px;width:45.20px">56.0</div>
<div class="td c" style="left:507.40px;top:58.62px;width:33.20px">2</div>
<div class="td c" style="left:542.60px;top:58.62px;width:17.60px">-</div>
<div class="td l" style="left:562.20px;top:58.62px;width:71.50px">116SM</div>
<div class="td l" style="left:635.70px;top:58.62px;width:140.70px">UNIVER BELI</div>
<div class="td c" style="left:778.40px;top:58.62px;width:68.30px">581.93</div>
<div class="td c" style="left:848.70px;top:58.62px;width:70.30px">1163.87</div>
<div class="td c s" style="left:0.00px;top:72.88px;width:22.30px">4</div>
<div class="td l s" style="left:24.30px;top:72.88px;width:101.00px">D40 - 5 F</div>
<div class="td l s" style="left:127.30px;top:72.88px;width:79.70px">Petar Petrovic</div>
<div class="td c s" style="left:209.00px;top:72.88px;width:104.10px">800 x 560 x 720</div>
<div class="td l s" style="left:315.10px;top:72.88px;width:92.90px">Polica</div>
<div class="td c s" style="left:410.00px;top:72.88px;width:48.20px">75.4&#x27;</div>
<div class="td c s" style="left:460.20px;top:72.88px;width:45.20px">56.0</div>
<div class="td c s" style="left:507.40px;top:72.88px;width:33.20px">1</div>
<div class="td c s" style="left:542.60px;top:72.88px;width:17.60px">-</div>
<div class="td l s" style="left:562.20px;top:72.88px;width:71.50px">116SM</div>
<div class="td l s" style="left:635.70px;top:72.88px;width:140.70px">UNIVER BELI</div>
<div class="td c s" style="left:778.40px;top:72.88px;width:68.30px">609.30</div>
<div class="td c s" style="left:848.70px;top:72.88px;width:70.30px">609.30</div>
<div class="td c s" style="left:0.00px;top:87.14px;width:22.30px">5</div>
<div class="td l s" style="left:24.30px;top:87.14px;width:101.00px">D60</div>
<div class="td l s" style="left:127.30px;top:87.14px;width:79.70px">Petar Petrovic</div>
<div class="td c s" style="left:209.00px;top:87.14px;width:104.10px">600 x 560 x 720</div>
<div class="td l s" style="left:315.10px;top:87.14px;width:92.90px">Patos</div>
<div class="td c s" style="left:410.00px;top:87.14px;width:48.20px">56.4&#x27;</div>
<div class="td c s" style="left:460.20px;top:87.14px;width:45.20px">56.0</div>
<div class="td c s" style="left:507.40px;top:87.14px;width:33.20px">1</div>
<div class="td c s" style="left:542.60px;top:87.14px;width:17.60px">-</div>
<div class="td l s" style="left:562.20px;top:87.14px;width:71.50px">116SM</div>
<div class="td l s" style="left:635.70px;top:87.14px;width:140.70px">UNIVER BELI</div>
<div class="td c s" style="left:778.40px;top:87.14px;width:68.30px">456.39</div>
<div class="td c s" style="left:848.70px;top:87.14px;width:70.30px">456.39</div>
<div class="td c s" style="left:0.00px;top:101.40px;width:22.30px">6</div>
<div class="td l s" style="left:24.30px;top:101.40px;width:101.00px">D60</div>
<div class="td l s" style="left:127.30px;top:101.40px;width:79.70px">Petar Petrovic</div>
<div class="td c s" style="left:209.00px;top:101.40px;width:104.10px">600 x 560 x 720</div>
<div class="td l s" style="left:315.10px;top:101.40px;width:92.90px">Vezna letva</div>
<div class="td c s" style="left:410.00px;top:101.40px;width:48.20px">56.4&#x27;</div>
<div class="td c s" style="left:460.20px;top:101.40px;width:45.20px">10.0</div>
<div class="td c s" style="left:507.40px;top:101.40px;width:33.20px">2</div>
<div class="td c s" style="left:542.60px;top:101.40px;width:17.60px">-</div>
<div class="td l s" style="left:562.20px;top:101.40px;width:71.50px">116SM</div>
<div class="td l s" style="left:635.70px;top:101.40px;width:140.70px">UNIVER BELI</div>
<div class="td c s" style="left:778.40px;top:101.40px;width:68.30px">106.72</div>
<div class="td c s" style="left:848.70px;top:101.40px;width:70.30px">213.43</div>
<div class="td c s" style="left:0.00px;top:115.66px;width:22.30px">7</div>
<div class="td l s" style="left:24.30px;top:115.66px;width:101.00px">D60</div>
<div class="td l s" style="left:127.30px;top:115.66px;width:79.70px">Petar Petrovic</div>
<div class="td c s" style="left:209.00px;top:115.66px;width:104.10px">600 x 560 x 720</div>
<div class="td l s" style="left:315.10px;top:115.66px;width:92.90px">Bocna stranica</div>
<div class="td c s" style="left:410.00px;top:115.66px;width:48.20px">72.0&#x27;</div>
<div class="td c s" style="left:460.20px;top:115.66px;width:45.20px">56.0</div>
<div class="td c s" style="left:507.40px;top:115.66px;width:33.20px">2</div>
<div class="td c s" style="left:542.60px;top:115.66px;width:17.60px">-</div>
<div class="td l s" style="left:562.20px;top:115.66px;width:71.50px">116SM</div>
<div class="td l s" style="left:635.70px;top:115.66px;width:140.70px">UNIVER BELI</div>
<div class="td c s" style="left:778.40px;top:115.66px;width:68.30px">581.93</div>
<div class="td c s" style="left:848.70px;top:115.66px;width:70.30px">1163.87</div>
<div class="td c s" style="left:0.00px;top:129.92px;width:22.30px">8</div>
<div class="td l s" style="left:24.30px;top:129.92px;width:101.00px">D60</div>
<div class="td l s" style="left:127.30px;top:129.92px;width:79.70px">Petar Petrovic</div>
<div class="td c s" style="left:209.00px;top:129.92px;width:104.10px">600 x 560 x 720</div>
<div class="td l s" style="left:315.10px;top:129.92px;width:92.90px">Polica</div>
<div class="td c s" style="left:410.00px;top:129.92px;width:48.20px">55.4&#x27;</div>
<div class="td c s" style="left:460.20px;top:129.92px;width:45.20px">55.0</div>
<div class="td c s" style="left:507.40px;top:129.92px;width:33.20px">1</div>
<div class="td c s" style="left:542.60px;top:129.92px;width:17.60px">-</div>
<div class="td l s" style="left:562.20px;top:129.92px;width:71.50px">116SM</div>
<div class="td l s" style="left:635.70px;top:129.92px;width:140.70px">UNIVER BELI</div>
<div class="td c s" style="left:778.40px;top:129.92px;width:68.30px">440.87</div>
<div class="td c s" style="left:848.70px;top:129.92px;width:70.30px">440.87</div>
<div class="td c s" style="left:0.00px;top:144.18px;width:22.30px">9</div>
<div class="td l s" style="left:24.30px;top:144.18px;width:101.00px">D40 sa 1 F</div>
<div class="td l s" style="left:127.30px;top:144.18px;width:79.70px">Petar Petrovic</div>
<div class="td c s" style="left:209.00px;top:144.18px;width:104.10px">400 x 560 x 720</div>
<div class="td l s" style="left:315.10px;top:144.18px;width:92.90px">Patos</div>
<div class="td c s" style="left:410.00px;top:144.18px;width:48.20px">36.4&#x27;</div>
<div class="td c s" style="left:460.20px;top:144.18px;width:45.20px">56.0</div>
<div class="td c s" style="left:507.40px;top:144.18px;width:33.20px">1</div>
<div class="td c s" style="left:542.60px;top:144.18px;width:17.60px">-</div>
<div class="td l s" style="left:562.20px;top:144.18px;width:71.50px">116SM</div>
<div class="td l s" style="left:635.70px;top:144.18px;width:140.70px">UNIVER BELI</div>
<div class="td c s" style="left:778.40px;top:144.18px;width:68.30px">295.44</div>
<div class="td c s" style="left:848.70px;top:144.18px;width:70.30px">295.44</div>
<div class="td c s" style="left:0.00px;top:158.44px;width:22.30px">10</div>
<div class="td l s" style="left:24.30px;top:158.44px;width:101.00px">D40 sa 1 F</div>
<div class="td l s" style="left:127.30px;top:158.44px;width:79.70px">Petar Petrovic</div>
<div class="td c s" style="left:209.00px;top:158.44px;width:104.10px">400 x 560 x 720</div>
<div class="td l s" style="left:315.10px;top:158.44px;width:92.90px">Vezna letva</div>
<div class="td c s" style="left:410.00px;top:158.44px;width:48.20px">36.4&#x27;</div>
<div class="td c s" style="left:460.20px;top:158.44px;width:45.20px">10.0</div>
<div class="td c s" style="left:507.40px;top:158.44px;width:33.20px">2</div>
<div class="td c s" style="left:542.60px;top:158.44px;width:17.60px">-</div>
<div class="td l s" style="left:562.20px;top:158.44px;width:71.50px">116SM</div>
<div class="td l s" style="left:635.70px;top:158.44px;width:140.70px">UNIVER BELI</div>
<div class="td c s" style="left:778.40px;top:158.44px;width:68.30px">69.76</div>
<div class="td c s" style="left:848.70px;top:158.44px;width:70.30px">139.52</div>
<div class="td c s" style="left:0.00px;top:172.70px;width:22.30px">11</div>
<div class="td l s" style="left:24.30px;top:172.70px;width:101.00px">D40 sa 1 F</div>
<div class="td l s" style="left:127.30px;top:172.70px;width:79.70px">Petar Petrovic</div>
<div class="td c s" style="left:209.00px;top:172.70px;width:104.10px">400 x 560 x 720</div>
<div class="td l s" style="left:315.10px;top:172.70px;width:92.90px">Bocna stranica</div>
<div class="td c s" style="left:410.00px;top:172.70px;width:48.20px">72.0&#x27;</div>
<div class="td c s" style="left:460.20px;top:172.70px;width:45.20px">56.0</div>
<div class="td c s" style="left:507.40px;top:172.70px;width:33.20px">2</div>
<div class="td c s" style="left:542.60px;top:172.70px;width:17.60px">-</div>
<div class="td l s" style="left:562.20px;top:172.70px;width:71.50px">116SM</div>
<div class="td l s" style="left:635.70px;top:172.70px;width:140.70px">UNIVER BELI</div>
<div class="td c s" style="left:778.40px;top:172.70px;width:68.30px">581.93</div>
<div class="td c s" style="left:848.70px;top:172.70px;width:70.30px">1163.87</div>
<div class="td c s" style="left:0.00px;top:186.96px;width:22.30px">12</div>
<div class="td l s" style="left:24.30px;top:186.96px;width:101.00px">D40 sa 1 F</div>
<div class="td l s" style="left:127.30px;top:186.96px;width:79.70px">Petar Petrovic</div>
<div class="td c s" style="left:209.00px;top:186.96px;width:104.10px">400 x 560 x 720</div>
<div class="td l s" style="left:315.10px;top:186.96px;width:92.90px">Polica</div>
<div class="td c s" style="left:410.00px;top:186.96px;width:48.20px">35.4&#x27;</div>
<div class="td c s" style="left:460.20px;top:186.96px;width:45.20px">56.0</div>
<div class="td c s" style="left:507.40px;top:186.96px;width:33.20px">2</div>
<div class="td c s" style="left:542.60px;top:186.96px;width:17.60px">-</div>
<div class="td l s" style="left:562.20px;top:186.96px;width:71.50px">116SM</div>
<div class="td l s" style="left:635.70px;top:186.96px;width:140.70px">UNIVER BELI</div>
<div class="td c s" style="left:778.40px;top:186.96px;width:68.30px">287.39</div>
<div class="td c s" style="left:848.70px;top:186.96px;width:70.30px">574.78</div>
<div class="td c s" style="left:0.00px;top:201.22px;width:22.30px">13</div>
<div class="td l s" style="left:24.30px;top:201.22px;width:101.00px">D40 sa 1 F</div>
<div class="td l s" style="left:127.30px;top:201.22px;width:79.70px">Petar Petrovic</div>
<div class="td c s" style="left:209.00px;top:201.22px;width:104.10px">400 x 560 x 720</div>
<div class="td l s" style="left:315.10px;top:201.22px;width:92.90px">Stranica fioke</div>
<div class="td c s" style="left:410.00px;top:201.22px;width:48.20px">55.0&#x27;</div>
<div class="td c s" style="left:460.20px;top:201.22px;width:45.20px">15.7</div>
<div class="td c s" style="left:507.40px;top:201.22px;width:33.20px">2</div>
<div class="td c s" style="left:542.60px;top:201.22px;width:17.60px">-</div>
<div class="td l s" style="left:562.20px;top:201.22px;width:71.50px">116SM</div>
<div class="td l s" style="left:635.70px;top:201.22px;width:140.70px">UNIVER BELI</div>
<div class="td c s" style="left:778.40px;top:201.22px;width:68.30px">146.38</div>
<div class="td c s" style="left:848.70px;top:201.22px;width:70.30px">292.77</div>
<div class="td c s" style="left:0.00px;top:215.48px;width:22.30px">14</div>
<div class="td l s" style="left:24.30px;top:215.48px;width:101.00px">D40 sa 1 F</div>
<div class="td l s" style="left:127.30px;top:215.48px;width:79.70px">Petar Petrovic</div>
<div class="td c s" style="left:209.00px;top:215.48px;width:104.10px">400 x 560 x 720</div>
<div class="td l s" style="left:315.10px;top:215.48px;width:92.90px">Stranica fioke</div>
<div class="td c s" style="left:410.00px;top:215.48px;width:48.20px">30.2&#x27;</div>
<div class="td c s" style="left:460.20px;top:215.48px;width:45.20px">15.7</div>
<div class="td c s" style="left:507.40px;top:215.48px;width:33.20px">2</div>
<div class="td c s" style="left:542.60px;top:215.48px;width:17.60px">-</div>
<div class="td l s" style="left:562.20px;top:215.48px;width:71.50px">116SM</div>
<div class="td l s" style="left:635.70px;top:215.48px;width:140.70px">UNIVER BELI</div>
<div class="td c s" style="left:778.40px;top:215.48px;width:68.30px">81.50</div>
<div class="td c s" style="left:848.70px;top:215.48px;width:70.30px">163.01</div>
<div class="td c s" style="left:0.00px;top:229.74px;width:22.30px">15</div>
<div class="td l s" style="left:24.30px;top:229.74px;width:101.00px">D40 sa 1 F</div>
<div class="td l s" style="left:127.30px;top:229.74px;width:79.70px">Petar Petrovic</div>
<div class="td c s" style="left:209.00px;top:229.74px;width:104.10px">400 x 560 x 720</div>
<div class="td l s" style="left:315.10px;top:229.74px;width:92.90px">Patos</div>
<div class="td c s" style="left:410.00px;top:229.74px;width:48.20px">36.4&#x27;</div>
<div class="td c s" style="left:460.20px;top:229.74px;width:45.20px">56.0</div>
<div class="td c s" style="left:507.40px;top:229.74px;width:33.20px">1</div>
<div class="td c s" style="left:542.60px;top:229.74px;width:17.60px">-</div>
<div class="td l s" style="left:562.20px;top:229.74px;width:71.50px">116SM</div>
<div class="td l s" style="left:635.70px;top:229.74px;width:140.70px">UNIVER BELI</div>
<div class="td c s" style="left:778.40px;top:229.74px;width:68.30px">295.44</div>
<div class="td c s" style="left:848.70px;top:229.74px;width:70.30px">295.44</div>
<div class="td c" style="left:0.00px;top:244.00px;width:22.30px">16</div>
<div class="td l" style="left:24.30px;top:244.00px;width:101.00px">D40 sa 1 F</div>
<div class="td l" style="left:127.30px;top:244.00px;width:79.70px">Petar Petrovic</div>
<div class="td c" style="left:209.00px;top:244.00px;width:104.10px">400 x 560 x 720</div>
<div class="td l" style="left:315.10px;top:244.00px;width:92.90px">Vezna letva</div>
<div class="td c" style="left:410.00px;top:244.00px;width:48.20px">36.4&#x27;</div>
<div class="td c" style="left:460.20px;top:244.00px;width:45.20px">10.0</div>
<div class="td c" style="left:507.40px;top:244.00px;width:33.20px">2</div>
<div class="td c" style="left:542.60px;top:244.00px;width:17.60px">-</div>
<div class="td l" style="left:562.20px;top:244.00px;width:71.50px">116SM</div>
<div class="td l" style="left:635.70px;top:244.00px;width:140.70px">UNIVER BELI</div>
<div class="td c" style="left:778.40px;top:244.00px;width:68.30px">69.76</div>
<div class="td c" style="left:848.70px;top:244.00px;width:70.30px">139.52</div>
<div class="td c" style="left:0.00px;top:258.26px;width:22.30px">17</div>
<div class="td l" style="left:24.30px;top:258.26px;width:101.00px">D40 sa 1 F</div>
<div class="td l" style="left:127.30px;top:258.26px;width:79.70px">Petar Petrovic</div>
<div class="td c" style="left:209.00px;top:258.26px;width:104.10px">400 x 560 x 720</div>
<div class="td l" style="left:315.10px;top:258.26px;width:92.90px">Bocna stranica</div>
<div class="td c" style="left:410.00px;top:258.26px;width:48.20px">72.0&#x27;</div>
<div class="td c" style="left:460.20px;top:258.26px;width:45.20px">56.0</div>
<div class="td c" style="left:507.40px;top:258.26px;width:33.20px">2</div>
<div class="td c" style="left:542.60px;top:258.26px;width:17.60px">-</div>
<div class="td l" style="left:562.20px;top:258.26px;width:71.50px">116SM</div>
<div class="td l" style="left:635.70px;top:258.26px;width:140.70px">UNIVER BELI</div>
<div class="td c" style="left:778.40px;top:258.26px;width:68.30px">581.93</div>
<div class="td c" style="left:848.70px;top:258.26px;width:70.30px">1163.87</div>
<div class="td c" style="left:0.00px;top:272.52px;width:22.30px">18</div>
<div class="td l" style="left:24.30px;top:272.52px;width:101.00px">D40 sa 1 F</div>
<div class="td l" style="left:127.30px;top:272.52px;width:79.70px">Petar Petrovic</div>
<div class="td c" style="left:209.00px;top:272.52px;width:104.10px">400 x 560 x 720</div>
<div class="td l" style="left:315.10px;top:272.52px;width:92.90px">Polica</div>
<div class="td c" style="left:410.00px;top:272.52px;width:48.20px">35.4&#x27;</div>
<div class="td c" style="left:460.20px;top:272.52px;width:45.20px">56.0</div>
<div class="td c" style="left:507.40px;top:272.52px;width:33.20px">2</div>
<div class="td c" style="left:542.60px;top:272.52px;width:17.60px">-</div>
<div class="td l" style="left:562.20px;top:272.52px;width:71.50px">116SM</div>
<div class="td l" style="left:635.70px;top:272.52px;width:140.70px">UNIVER BELI</div>
<div class="td c" style="left:778.40px;top:272.52px;width:68.30px">287.39</div>
<div class="td c" style="left:848.70px;top:272.52px;width:70.30px">574.78</div>
<div class="td c" style="left:0.00px;top:286.78px;width:22.30px">19</div>
<div class="td l" style="left:24.30px;top:286.78px;width:101.00px">D40 sa 1 F</div>
<div class="td l" style="left:127.30px;top:286.78px;width:79.70px">Petar Petrovic</div>
<div class="td c" style="left:209.00px;top:286.78px;width:104.10px">400 x 560 x 720</div>
<div class="td l" style="left:315.10px;top:286.78px;width:92.90px">Stranica fioke</div>
<div class="td c" style="left:410.00px;top:286.78px;width:48.20px">55.0&#x27;</div>
<div class="td c" style="left:460.20px;top:286.78px;width:45.20px">15.7</div>
<div class="td c" style="left:507.40px;top:286.78px;width:33.20px">2</div>
<div class="td c" style="left:542.60px;top:286.78px;width:17.60px">-</div>
<div class="td l" style="left:562.20px;top:286.78px;width:71.50px">116SM</div>
<div class="td l" style="left:635.70px;top:286.78px;width:140.70px">UNIVER BELI</div>
<div class="td c" style="left:778.40px;top:286.78px;width:68.30px">146.38</div>
<div class="td c" style="left:848.70px;top:286.78px;width:70.30px">292.77</div>
<div class="td c" style="left:0.00px;top:301.04px;width:22.30px">20</div>
<div class="td l" style="left:24.30px;top:301.04px;width:101.00px">D40 sa 1 F</div>
<div class="td l" style="left:127.30px;top:301.04px;width:79.70px">Petar Petrovic</div>
<div class="td c" style="left:209.00px;top:301.04px;width:104.10px">400 x 560 x 720</div>
<div class="td l" style="left:315.10px;top:301.04px;width:92.90px">Stranica fioke</div>
<div class="td c" style="left:410.00px;top:301.04px;width:48.20px">30.2&#x27;</div>
<div class="td c" style="left:460.20px;top:301.04px;width:45.20px">15.7</div>
<div class="td c" style="left:507.40px;top:301.04px;width:33.20px">2</div>
<div class="td c" style="left:542.60px;top:301.04px;width:17.60px">-</div>
<div class="td l" style="left:562.20px;top:301.04px;width:71.50px">116SM</div>
<div class="td l" style="left:635.70px;top:301.04px;width:140.70px">UNIVER BELI</div>
<div class="td c" style="left:778.40px;top:301.04px;width:68.30px">81.50</div>
<div class="td c" style="left:848.70px;top:301.04px;width:70.30px">163.01</div>
<div class="td c" style="left:0.00px;top:315.30px;width:22.30px">21</div>
<div class="td l" style="left:24.30px;top:315.30px;width:101.00px">V80</div>
<div class="td l" style="left:127.30px;top:315.30px;width:79.70px">Petar Petrovic</div>
<div class="td c" style="left:209.00px;top:315.30px;width:104.10px">800 x 280 x 900</div>
<div class="td l" style="left:315.10px;top:315.30px;width:92.90px">Patos</div>
<div class="td c" style="left:410.00px;top:315.30px;width:48.20px">76.4&#x27;</div>
<div class="td c" style="left:460.20px;top:315.30px;width:45.20px">28.0</div>
<div class="td c" style="left:507.40px;top:315.30px;width:33.20px">1</div>
<div class="td c" style="left:542.60px;top:315.30px;width:17.60px">-</div>
<div class="td l" style="left:562.20px;top:315.30px;width:71.50px">116SM</div>
<div class="td l" style="left:635.70px;top:315.30px;width:140.70px">UNIVER BELI</div>
<div class="td c" style="left:778.40px;top:315.30px;width:68.30px">329.02</div>
<div class="td c" style="left:848.70px;top:315.30px;width:70.30px">329.02</div>
<div class="td c" style="left:0.00px;top:329.56px;width:22.30px">22</div>
<div class="td l" style="left:24.30px;top:329.56px;width:101.00px">V80</div>
<div class="td l" style="left:127.30px;top:329.56px;width:79.70px">Petar Petrovic</div>
<div class="td c" style="left:209.00px;top:329.56px;width:104.10px">800 x 280 x 900</div>
<div class="td l" style="left:315.10px;top:329.56px;width:92.90px">Plafon</div>
<div class="td c" style="left:410.00px;top:329.56px;width:48.20px">76.4&#x27;</div>
<div class="td c" style="left:460.20px;top:329.56px;width:45.20px">28.0</div>
<div class="td c" style="left:507.40px;top:329.56px;width:33.20px">1</div>
<div class="td c" style="left:542.60px;top:329.56px;width:17.60px">-</div>
<div class="td l" style="left:562.20px;top:329.56px;width:71.50px">116SM</div>
<div class="td l" style="left:635.70px;top:329.56px;width:140.70px">UNIVER BELI</div>
<div class="td c" style="left:778.40px;top:329.56px;width:68.30px">329.02</div>
<div class="td c" style="left:848.70px;top:329.56px;width:70.30px">329.02</div>
<div class="td c" style="left:0.00px;top:343.82px;width:22.30px">23</div>
<div class="td l" style="left:24.30px;top:343.82px;width:101.00px">V80</div>
<div class="td l" style="left:127.30px;top:343.82px;width:79.70px">Petar Petrovic</div>
<div class="td c" style="left:209.00px;top:343.82px;width:104.10px">800 x 280 x 900</div>
<div class="td l" style="left:315.10px;top:343.82px;width:92.90px">Bocna stranica</div>
<div class="td c" style="left:410.00px;top:343.82px;width:48.20px">90.0&#x27;</div>
<div class="td c" style="left:460.20px;top:343.82px;width:45.20px">28.0</div>
<div class="td c" style="left:507.40px;top:343.82px;width:33.20px">2</div>
<div class="td c" style="left:542.60px;top:343.82px;width:17.60px">-</div>
<div class="td l" style="left:562.20px;top:343.82px;width:71.50px">116SM</div>
<div class="td l" style="left:635.70px;top:343.82px;width:140.70px">UNIVER BELI</div>
<div class="td c" style="left:778.40px;top:343.82px;width:68.30px">387.15</div>
<div class="td c" style="left:848.70px;top:343.82px;width:70.30px">774.29</div>
<div class="td c" style="left:0.00px;top:358.08px;width:22.30px">24</div>
<div class="td l" style="left:24.30px;top:358.08px;width:101.00px">V80</div>
<div class="td l" style="left:127.30px;top:358.08px;width:79.70px">Petar Petrovic</div>
<div class="td c" style="left:209.00px;top:358.08px;width:104.10px">800 x 280 x 900</div>
<div class="td l" style="left:315.10px;top:358.08px;width:92.90px">Polica</div>
<div class="td c" style="left:410.00px;top:358.08px;width:48.20px">75.4&#x27;</div>
<div class="td c" style="left:460.20px;top:358.08px;width:45.20px">27.0</div>
<div class="td c" style="left:507.40px;top:358.08px;width:33.20px">2</div>
<div class="td c" style="left:542.60px;top:358.08px;width:17.60px">-</div>
<div class="td l" style="left:562.20px;top:358.08px;width:71.50px">116SM</div>
<div class="td l" style="left:635.70px;top:358.08px;width:140.70px">UNIVER BELI</div>
<div class="td c" style="left:778.40px;top:358.08px;width:68.30px">314.59</div>
<div class="td c" style="left:848.70px;top:358.08px;width:70.30px">629.17</div>
<div class="td c" style="left:0.00px;top:372.34px;width:22.30px">25</div>
<div class="td l" style="left:24.30px;top:372.34px;width:101.00px">V60</div>
<div class="td l" style="left:127.30px;top:372.34px;width:79.70px">Petar Petrovic</div>
<div class="td c" style="left:209.00px;top:372.34px;width:104.10px">600 x 280 x 900</div>
<div class="td l" style="left:315.10px;top:372.34px;width:92.90px">Patos</div>
<div class="td c" style="left:410.00px;top:372.34px;width:48.20px">56.4&#x27;</div>
<div class="td c" style="left:460.20px;top:372.34px;width:45.20px">28.0</div>
<div class="td c" style="left:507.40px;top:372.34px;width:33.20px">1</div>
<div class="td c" style="left:542.60px;top:372.34px;width:17.60px">-</div>
<div class="td l" style="left:562.20px;top:372.34px;width:71.50px">116SM</div>
<div class="td l" style="left:635.70px;top:372.34px;width:140.70px">UNIVER BELI</div>
<div class="td c" style="left:778.40px;top:372.34px;width:68.30px">243.54</div>
<div class="td c" style="left:848.70px;top:372.34px;width:70.30px">243.54</div>
<div class="td c" style="left:0.00px;top:386.60px;width:22.30px">26</div>
<div class="td l" style="left:24.30px;top:386.60px;width:101.00px">V60</div>
<div class="td l" style="left:127.30px;top:386.60px;width:79.70px">Petar Petrovic</div>
<div class="td c" style="left:209.00px;top:386.60px;width:104.10px">600 x 280 x 900</div>
<div class="td l" style="left:315.10px;top:386.60px;width:92.90px">Plafon</div>
<div class="td c" style="left:410.00px;top:386.60px;width:48.20px">56.4&#x27;</div>
<div class="td c" style="left:460.20px;top:386.60px;width:45.20px">28.0</div>
<div class="td c" style="left:507.40px;top:386.60px;width:33.20px">1</div>
<div class="td c" style="left:542.60px;top:386.60px;width:17.60px">-</div>
<div class="td l" style="left:562.20px;top:386.60px;width:71.50px">116SM</div>
<div class="td l" style="left:635.70px;top:386.60px;width:140.70px">UNIVER BELI</div>
<div class="td c" style="left:778.40px;top:386.60px;width:68.30px">243.54</div>
<div class="td c" style="left:848.70px;top:386.60px;width:70.30px">243.54</div>
<div class="td c" style="left:0.00px;top:400.86px;width:22.30px">27</div>
<div class="td l" style="left:24.30px;top:400.86px;width:101.00px">V60</div>
<div class="td l" style="left:127.30px;top:400.86px;width:79.70px">Petar Petrovic</div>
<div class="td c" style="left:209.00px;top:400.86px;width:104.10px">600 x 280 x 900</div>
<div class="td l" style="left:315.10px;top:400.86px;width:92.90px">Bocna stranica</div>
<div class="td c" style="left:410.00px;top:400.86px;width:48.20px">90.0&#x27;</div>
<div class="td c" style="left:460.20px;top:400.86px;width:45.20px">28.0</div>
<div class="td c" style="left:507.40px;top:400.86px;width:33.20px">2</div>
<div class="td c" style="left:542.60px;top:400.86px;width:17.60px">-</div>
<div class="td l" style="left:562.20px;top:400.86px;width:71.50px">116SM</div>
<div class="td l" style="left:635.70px;top:400.86px;width:140.70px">UNIVER BELI</div>
<div class="td c" style="left:778.40px;top:400.86px;width:68.30px">387.15</div>
<div class="td c" style="left:848.70px;top:400.86px;width:70.30px">774.29</div>
<div class="td c" style="left:0.00px;top:415.12px;width:22.30px">28</div>
<div class="td l" style="left:24.30px;top:415.12px;width:101.00px">V60</div>
<div class="td l" style="left:127.30px;top:415.12px;width:79.70px">Petar Petrovic</div>
<div class="td c" style="left:209.00px;top:415.12px;width:104.10px">600 x 280 x 900</div>
<div class="td l" style="left:315.10px;top:415.12px;width:92.90px">Polica</div>
<div class="td c" style="left:410.00px;top:415.12px;width:48.20px">55.4&#x27;</div>
<div class="td c" style="left:460.20px;top:415.12px;width:45.20px">27.0</div>
<div class="td c" style="left:507.40px;top:415.12px;width:33.20px">2</div>
<div class="td c" style="left:542.60px;top:415.12px;width:17.60px">-</div>
<div class="td l" style="left:562.20px;top:415.12px;width:71.50px">116SM</div>
<div class="td l" style="left:635.70px;top:415.12px;width:140.70px">UNIVER BELI</div>
<div class="td c" style="left:778.40px;top:415.12px;width:68.30px">231.80</div>
<div class="td c" style="left:848.70px;top:415.12px;width:70.30px">463.61</div>
<div class="td c" style="left:0.00px;top:429.38px;width:22.30px">29</div>
<div class="td l" style="left:24.30px;top:429.38px;width:101.00px">V40</div>
<div class="td l" style="left:127.30px;top:429.38px;width:79.70px">Petar Petrovic</div>
<div class="td c" style="left:209.00px;top:429.38px;width:104.10px">400 x 280 x 900</div>
<div class="td l" style="left:315.10px;top:429.38px;width:92.90px">Patos</div>
<div class="td c" style="left:410.00px;top:429.38px;width:48.20px">36.4&#x27;</div>
<div class="td c" style="left:460.20px;top:429.38px;width:45.20px">28.0</div>
<div class="td c" style="left:507.40px;top:429.38px;width:33.20px">1</div>
<div class="td c" style="left:542.60px;top:429.38px;width:17.60px">-</div>
<div class="td l" style="left:562.20px;top:429.38px;width:71.50px">116SM</div>
<div class="td l" style="left:635.70px;top:429.38px;width:140.70px">UNIVER BELI</div>
<div class="td c" style="left:778.40px;top:429.38px;width:68.30px">158.07</div>
<div class="td c" style="left:848.70px;top:429.38px;width:70.30px">158.07</div>
<div class="td c" style="left:0.00px;top:443.64px;width:22.30px">30</div>
<div class="td l" style="left:24.30px;top:443.64px;width:101.00px">V40</div>
<div class="td l" style="left:127.30px;top:443.64px;width:79.70px">Petar Petrovic</div>
<div class="td c" style="left:209.00px;top:443.64px;width:104.10px">400 x 280 x 900</div>
<div class="td l" style="left:315.10px;top:443.64px;width:92.90px">Plafon</div>
<div class="td c" style="left:410.00px;top:443.64px;width:48.20px">36.4&#x27;</div>
<div class="td c" style="left:460.20px;top:443.64px;width:45.20px">28.0</div>
<div class="td c" style="left:507.40px;top:443.64px;width:33.20px">1</div>
<div class="td c" style="left:542.60px;top:443.64px;width:17.60px">-</div>
<div class="td l" style="left:562.20px;top:443.64px;width:71.50px">116SM</div>
<div class="td l" style="left:635.70px;top:443.64px;width:140.70px">UNIVER BELI</div>
<div class="td c" style="left:778.40px;top:443.64px;width:68.30px">158.07</div>
<div class="td c" style="left:848.70px;top:443.64px;width:70.30px">158.07</div>
<div class="td c" style="left:0.00px;top:457.90px;width:22.30px">31</div>
<div class="td l" style="left:24.30px;top:457.90px;width:101.00px">V40</div>
<div class="td l" style="left:127.30px;top:457.90px;width:79.70px">Petar Petrovic</div>
<div class="td c" style="left:209.00px;top:457.90px;width:104.10px">400 x 280 x 900</div>
<div class="td l" style="left:315.10px;top:457.90px;width:92.90px">Bocna stranica</div>
<div class="td c" style="left:410.00px;top:457.90px;width:48.20px">90.0&#x27;</div>
<div class="td c" style="left:460.20px;top:457.90px;width:45.20px">28.0</div>
<div class="td c" style="left:507.40px;top:457.90px;width:33.20px">2</div>
<div class="td c" style="left:542.60px;top:457.90px;width:17.60px">-</div>
<div class="td l" style="left:562.20px;top:457.90px;width:71.50px">116SM</div>
<div class="td l" style="left:635.70px;top:457.90px;width:140.70px">UNIVER BELI</div>
<div class="td c" style="left:778.40px;top:457.90px;width:68.30px">387.15</div>
<div class="td c" style="left:848.70px;top:457.90px;width:70.30px">774.29</div>
</div>
<div class="a" id="sb"></div>
<div class="a" style="left:1033px;top:231px;width:14px;height:14px;border:1px solid #b4c6f2;border-radius:2px;background:linear-gradient(135deg,#dfe8fd,#bccdf7)"><svg class="a" style="left:2px;top:3px" width="9" height="6"><path d="M1 5L4.5 1.5L8 5" stroke="#4d6185" stroke-width="2" fill="none"/></svg></div>
<div class="a" style="left:1033px;top:245px;width:14px;height:15px;border:1px solid #b4c6f2;border-radius:2px;background:linear-gradient(90deg,#dfe8fd,#c6d5fa)"><div class="a" style="left:3px;top:3px;width:6px;height:7px;background:repeating-linear-gradient(#b9c9ef 0 1px,transparent 1px 2px)"></div></div>
<div class="a" style="left:1033px;top:682px;width:14px;height:14px;border:1px solid #b4c6f2;border-radius:2px;background:linear-gradient(135deg,#dfe8fd,#bccdf7)"><svg class="a" style="left:2px;top:4px" width="9" height="6"><path d="M1 1L4.5 4.5L8 1" stroke="#4d6185" stroke-width="2" fill="none"/></svg></div>
<!-- status bar -->
<div class="a" style="left:96px;top:697px;width:956px;height:3px;background:#ece9d8"></div>
<div class="a" style="left:96px;top:700px;width:956px;height:3px;border-top:2px solid #aca899;border-bottom:1px solid #fff"></div>
<div class="a" style="left:96px;top:724px;width:956px;height:1px;background:#d4e6ff"></div>
<svg class="a" style="left:1038px;top:712px" width="13" height="13"><path d="M12 1L1 12M12 5L5 12M12 9L9 12" stroke="#aca899" stroke-width="1.2"/><path d="M12 2L2 12M12 6L6 12M12 10L10 12" stroke="#fff" stroke-width="1"/></svg>
</body></html>
